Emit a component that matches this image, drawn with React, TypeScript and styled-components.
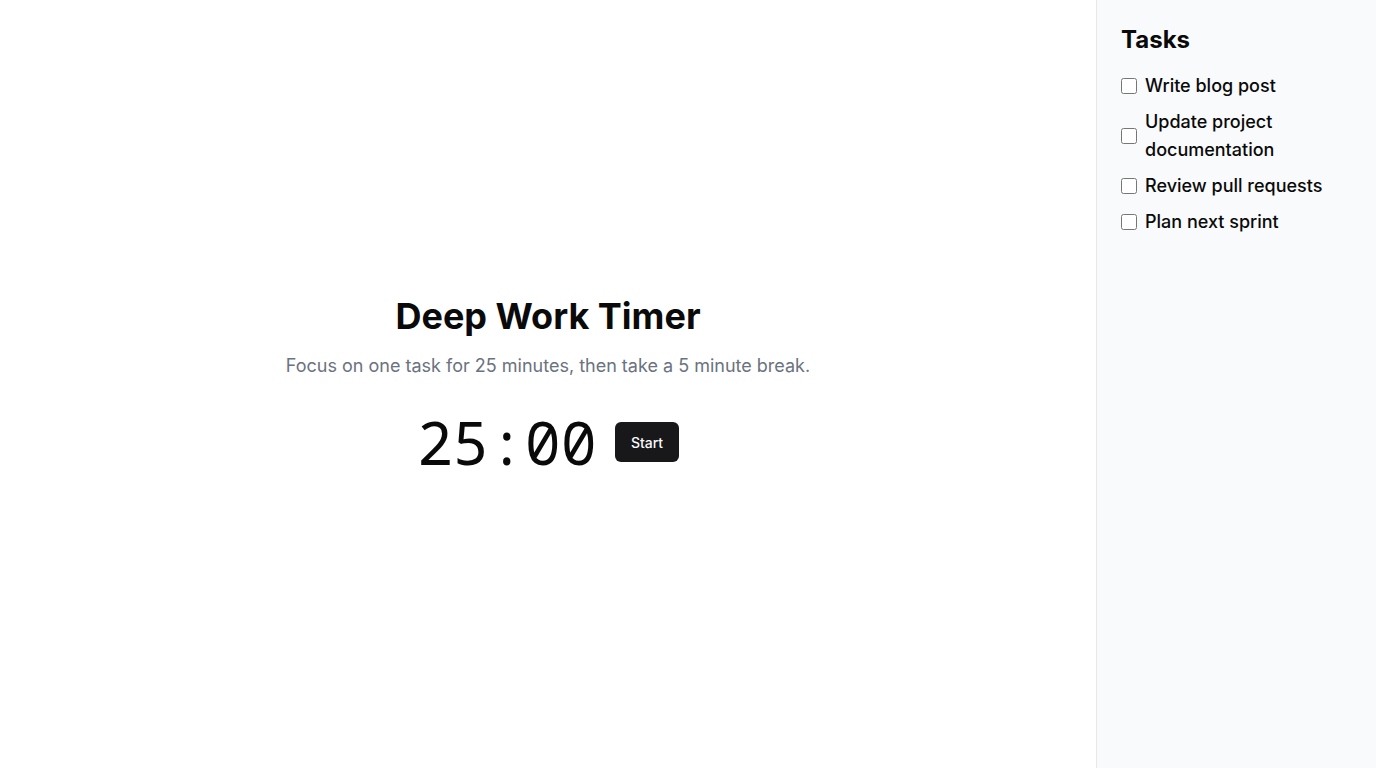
import React from "react";
import styled, { createGlobalStyle } from "styled-components";

const Global = createGlobalStyle`
  html, body { margin: 0; padding: 0; }
  body { font-family: Inter, "Noto Sans", sans-serif; color: #0a0a0a; background: #fff; }
  * { box-sizing: border-box; }
`;

const Layout = styled.div`
  display: flex;
  width: 100%;
  height: 100vh;
`;

const Main = styled.main`
  flex: 1;
  display: flex;
  flex-direction: column;
  align-items: center;
  justify-content: center;
`;

const Title = styled.h1`
  margin: 0;
  font-size: 36px;
  line-height: 40px;
  font-weight: 700;
  color: #0a0a0a;
`;

const Subtitle = styled.p`
  margin: 16px 0 0;
  font-size: 18px;
  line-height: 28px;
  color: #6b7280;
`;

const TimerRow = styled.div`
  margin-top: 32px;
  display: flex;
  align-items: center;
  gap: 18px;
`;

const Time = styled.span`
  font-family: "Noto Sans Mono", "DejaVu Sans Mono", monospace;
  font-size: 60px;
  line-height: 1;
  color: #0a0a0a;
`;

const Button = styled.button`
  height: 40px;
  padding: 0 16px;
  border: none;
  border-radius: 6px;
  background: #18181b;
  color: #fafafa;
  font-family: Inter, sans-serif;
  font-size: 14px;
  font-weight: 500;
  cursor: pointer;
`;

const Sidebar = styled.aside`
  width: 280px;
  flex-shrink: 0;
  border-left: 1px solid #e5e7eb;
  background: #f9fafb;
  padding: 24px 24px;
`;

const SideTitle = styled.h2`
  margin: 0 0 16px;
  font-size: 24px;
  line-height: 32px;
  font-weight: 700;
`;

const List = styled.ul`
  list-style: none;
  margin: 0;
  padding: 0;
  display: flex;
  flex-direction: column;
  gap: 8px;
`;

const Item = styled.li`
  display: flex;
  align-items: center;
  gap: 8px;
  font-size: 18px;
  line-height: 28px;
  font-weight: 500;
`;

const Check = styled.input`
  width: 16px;
  height: 16px;
  margin: 0;
  flex-shrink: 0;
`;

const tasks = ["Write blog post", "Update project documentation", "Review pull requests", "Plan next sprint"];

export default function App() {
  return (
    <Layout>
      <Global />
      <Main>
        <Title>Deep Work Timer</Title>
        <Subtitle>Focus on one task for 25 minutes, then take a 5 minute break.</Subtitle>
        <TimerRow>
          <Time>25:00</Time>
          <Button>Start</Button>
        </TimerRow>
      </Main>
      <Sidebar>
        <SideTitle>Tasks</SideTitle>
        <List>
          {tasks.map((t) => (
            <Item key={t}>
              <Check type="checkbox" />
              <span>{t}</span>
            </Item>
          ))}
        </List>
      </Sidebar>
    </Layout>
  );
}
